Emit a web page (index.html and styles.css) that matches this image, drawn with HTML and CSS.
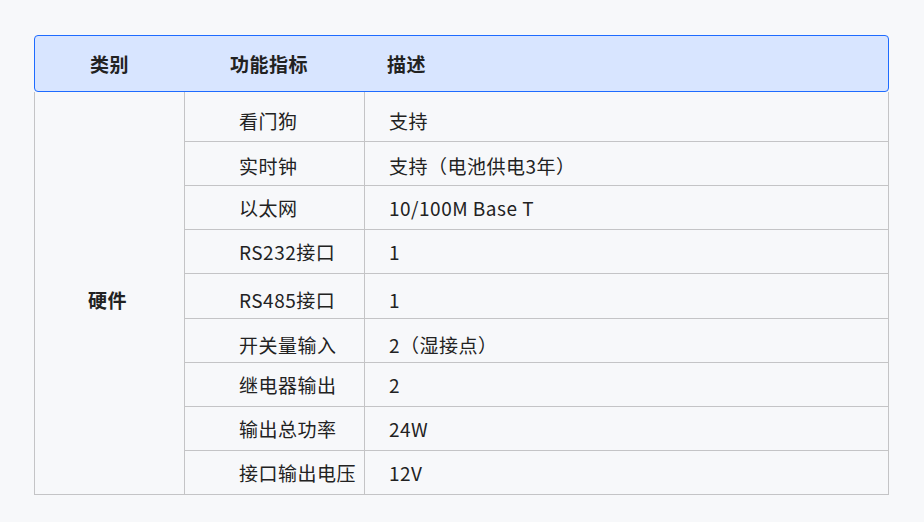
FILE: index.html
```html
<!DOCTYPE html>
<html lang="zh-CN">
<head>
<meta charset="utf-8">
<title>硬件参数</title>
<link rel="stylesheet" href="styles.css">
</head>
<body>
<div class="wrap">
  <div class="head">
    <div class="h-cat">类别</div>
    <div class="h-fn">功能指标</div>
    <div class="h-desc">描述</div>
  </div>
  <div class="grid">
    <div class="cat">硬件</div>
    <div class="row r1"><div class="fn">看门狗</div><div class="desc">支持</div></div>
    <div class="row r2"><div class="fn">实时钟</div><div class="desc">支持（电池供电3年）</div></div>
    <div class="row"><div class="fn">以太网</div><div class="desc">10/100M Base T</div></div>
    <div class="row"><div class="fn">RS232接口</div><div class="desc">1</div></div>
    <div class="row r5"><div class="fn">RS485接口</div><div class="desc">1</div></div>
    <div class="row r5"><div class="fn">开关量输入</div><div class="desc">2（湿接点）</div></div>
    <div class="row"><div class="fn">继电器输出</div><div class="desc">2</div></div>
    <div class="row"><div class="fn">输出总功率</div><div class="desc">24W</div></div>
    <div class="row last"><div class="fn">接口输出电压</div><div class="desc">12V</div></div>
  </div>
</div>
</body>
</html>
```

FILE: styles.css
```css
html, body {
  margin: 0;
  padding: 0;
  background: #f7f8fa;
}
body {
  font-family: "Noto Sans CJK SC", "Noto Sans", sans-serif;
  color: #222222;
  font-size: 19px;
  letter-spacing: 0.5px;
}
.wrap {
  padding: 35px 35px 0 34px;
  width: 855px;
}
.head {
  box-sizing: border-box;
  height: 57px;
  border: 1px solid #1e6bff;
  border-radius: 4px;
  background: #d8e5ff;
  display: grid;
  grid-template-columns: 149px 180px 1fr;
  align-items: center;
  font-weight: 700;
}
.h-cat { text-align: center; }
.h-fn { padding-left: 46px; }
.h-desc { padding-left: 23px; }

.grid {
  box-sizing: border-box;
  display: grid;
  grid-template-columns: 150px 180px 1fr;
  grid-template-rows: 50px 44px 44px 44px 45px 44px 44px 44px 43px;
  border-left: 1px solid #c4c4c6;
  border-right: 1px solid #c4c4c6;
  border-bottom: 1px solid #c4c4c6;
}
.cat {
  grid-column: 1;
  grid-row: 1 / span 9;
  border-right: 1px solid #c4c4c6;
  display: flex;
  align-items: center;
  justify-content: center;
  padding: 13px 4px 0 0;
  font-weight: 700;
}
.row { display: contents; }
.row > div {
  box-sizing: border-box;
  display: flex;
  align-items: center;
  border-bottom: 1px solid #c4c4c6;
  white-space: nowrap;
}
.row.last > div { border-bottom: none; }
.fn {
  grid-column: 2;
  padding-left: 54px;
  border-right: 1px solid #c4c4c6;
}
.desc {
  grid-column: 3;
  padding-left: 24px;
}
.row.r1 > div { padding-top: 8px; }
.row.r2 > div { padding-top: 3px; }
.row.r5 > div { padding-top: 7px; }
```
